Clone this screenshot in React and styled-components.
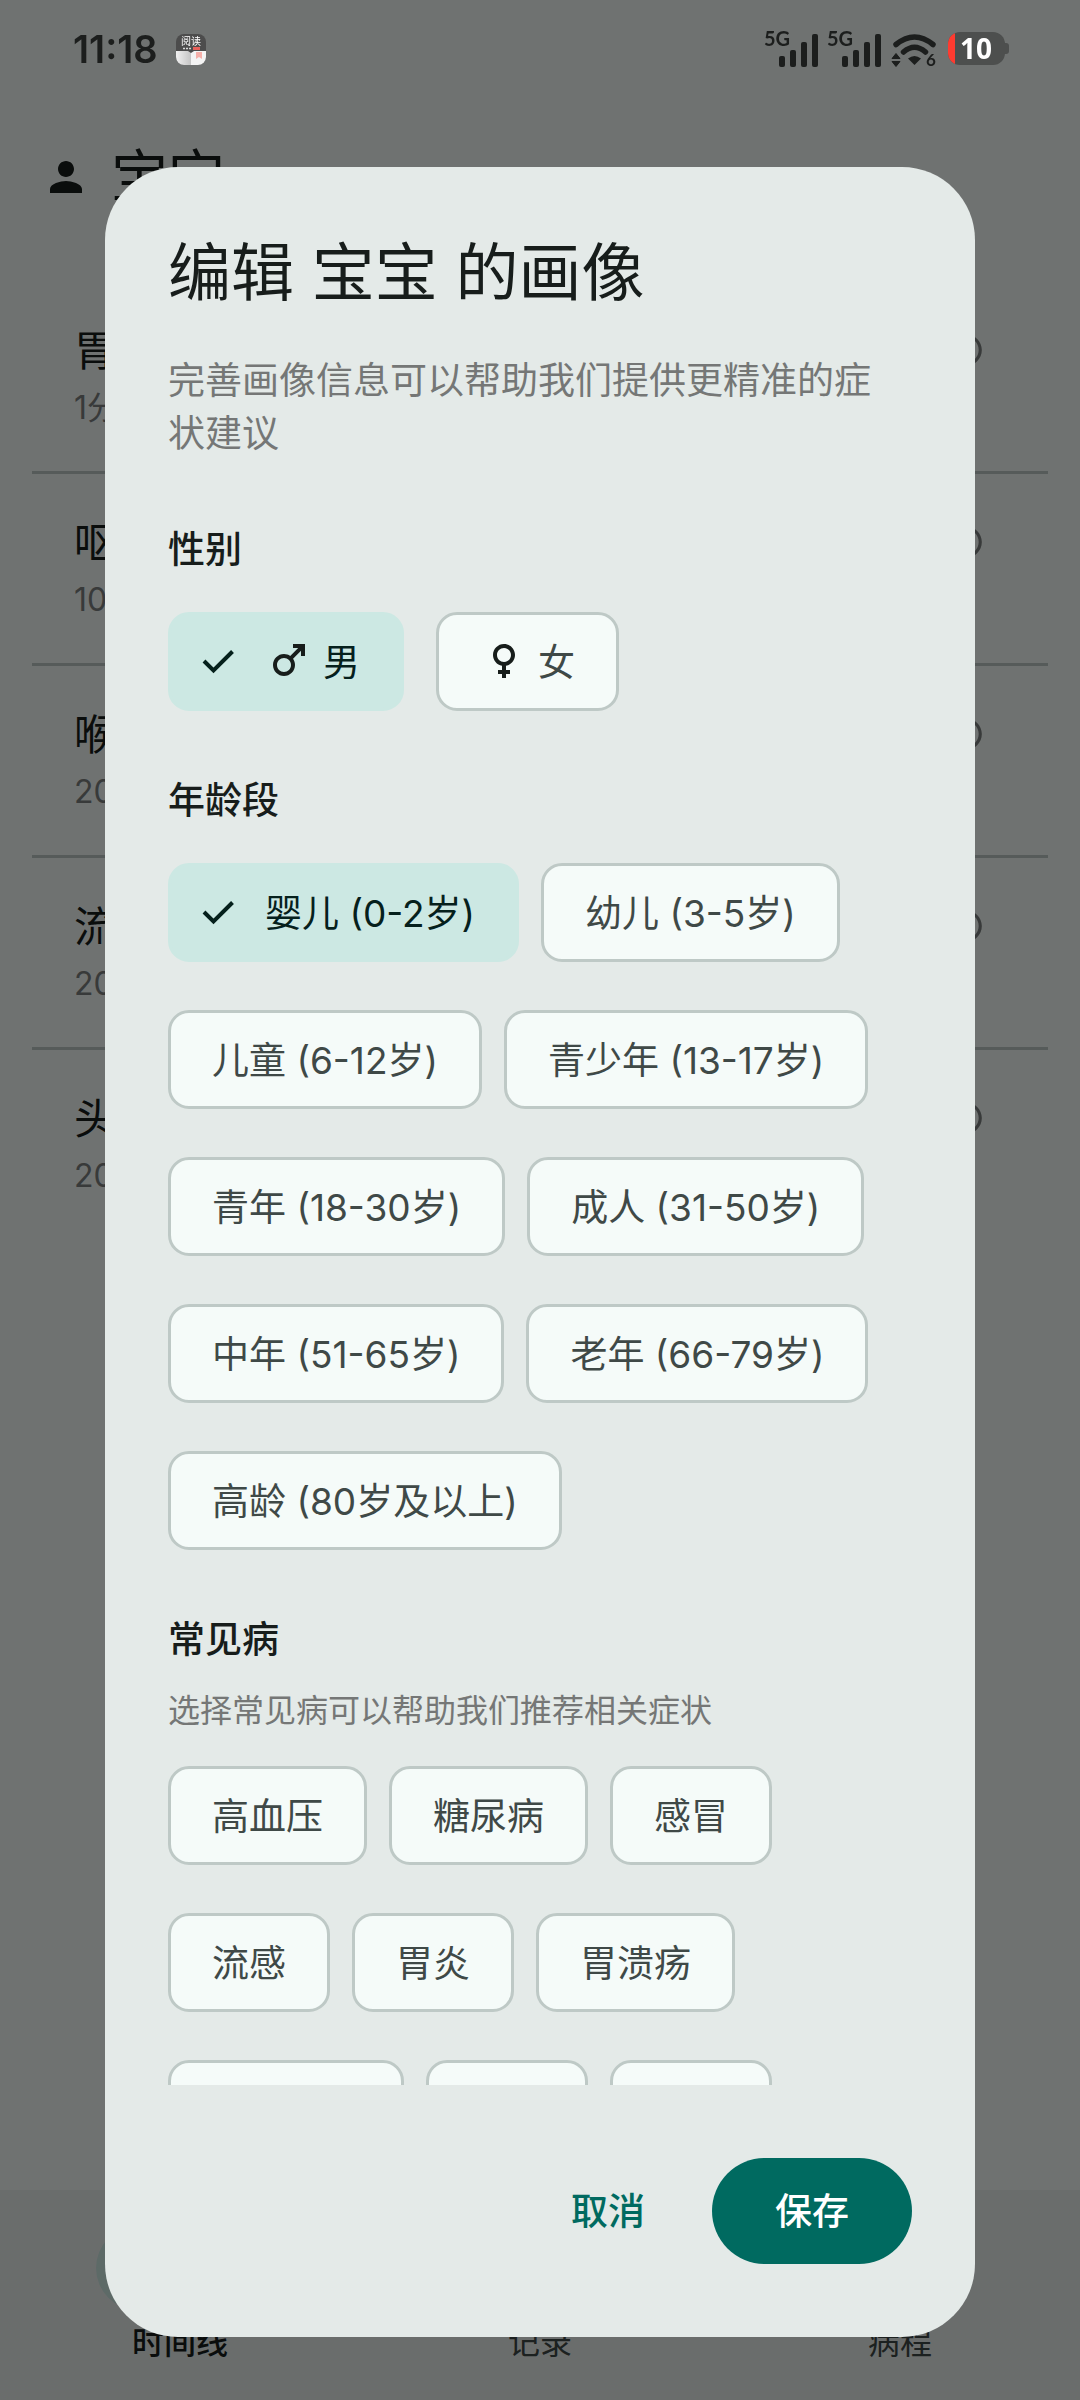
import React, { useState } from 'react'
import styled, { createGlobalStyle } from 'styled-components'
import {
  MdFemale,
  MdMale,
  MdOutlineAssignment,
  MdOutlineInfo,
  MdOutlineMedicalServices,
  MdPerson,
  MdTimeline,
} from 'react-icons/md'

const GlobalStyle = createGlobalStyle`
  * {
    box-sizing: border-box;
  }

  body {
    margin: 0;
    background: #F5FBF9;
    color: #171D1B;
    font-family: Inter, 'Noto Sans CJK SC', sans-serif;
  }

  button {
    font-family: inherit;
    cursor: pointer;
  }
`

const Page = styled.div`
  min-height: 100vh;
  display: flex;
  flex-direction: column;
`

const StatusBar = styled.div`
  position: relative;
  z-index: 2;
  display: flex;
  align-items: center;
  justify-content: space-between;
  height: 98px;
  padding: 0 70px 0 73px;
  color: #1C1E1D;
`

const StatusGroup = styled.div`
  display: flex;
  align-items: center;
  gap: ${props => props.$gap}px;

  svg {
    display: block;
    overflow: visible;
  }
`

const Clock = styled.span`
  font-size: 38px;
  font-weight: 600;
  line-height: 48px;
`

const Header = styled.header`
  display: flex;
  align-items: center;
  gap: 21px;
  height: 158px;
  padding: 0 42px;

  h1 {
    margin: 0;
    font-size: 57px;
    font-weight: 400;
    line-height: 74px;
  }
`

const SymptomList = styled.ul`
  flex: 1;
  margin: 0;
  padding: 26px 32px 0;
  list-style: none;
`

const SymptomItem = styled.li`
  display: flex;
  align-items: flex-start;
  justify-content: space-between;
  padding: 37px 63px 37px 42px;
  color: #7B817F;

  & + & {
    border-top: 3px solid #BEC9C6;
  }

  > svg {
    margin-top: 12px;
  }
`

const SymptomName = styled.div`
  font-size: 42px;
  line-height: 63px;
  color: #171D1B;
`

const SymptomTime = styled.div`
  font-size: 32px;
  line-height: 52px;
`

const NavBar = styled.nav`
  display: grid;
  grid-template-columns: repeat(3, 1fr);
  height: 210px;
  background: #EAF0EE;
`

const NavItem = styled.a`
  display: flex;
  flex-direction: column;
  align-items: center;
  justify-content: center;
  gap: 12px;
  font-size: 32px;
  font-weight: ${props => (props.$active ? 500 : 400)};
  line-height: 42px;
  text-decoration: none;
  color: ${props => (props.$active ? '#171D1B' : '#3F4947')};
`

const NavIcon = styled.span`
  display: grid;
  place-items: center;
  width: 168px;
  height: 84px;
  border-radius: 42px;
  background: ${props => (props.$active ? '#CCE8E3' : 'transparent')};
`

const Scrim = styled.div`
  position: fixed;
  inset: 0;
  z-index: 1;
  display: flex;
  padding: 167px 105px 63px;
  background: rgba(0, 0, 0, 0.545);
`

const Dialog = styled.section`
  flex: 1;
  display: flex;
  flex-direction: column;
  min-width: 0;
  padding: 63px 63px 73px;
  border-radius: 73px;
  background: #E4EAE8;
`

const DialogTitle = styled.h2`
  margin: 0 0 40px;
  font-size: 63px;
  font-weight: 400;
  line-height: 84px;
`

const DialogBody = styled.div`
  flex: 1;
  min-height: 0;
  overflow-y: auto;
  scrollbar-width: none;
`

const Intro = styled.p`
  margin: 0;
  padding-right: 21px;
  font-size: 37px;
  line-height: 53px;
  color: #757776;
`

const Group = styled.div`
  margin-top: 63px;
`

const GroupTitle = styled.h3`
  margin: 0;
  font-size: 37px;
  font-weight: 500;
  line-height: 54px;
`

const Hint = styled.p`
  margin: 24px 0 0;
  font-size: 32px;
  line-height: 40px;
  color: #757776;
`

const ChipRow = styled.div`
  display: flex;
  flex-wrap: wrap;
  gap: 48px ${props => props.$gap || 22}px;
  margin-top: 35px;
`

const ChipButton = styled.button`
  display: flex;
  align-items: center;
  height: 99px;
  padding: 0 41px 4px ${props => (props.$selected ? 27 : 41)}px;
  border: 3px solid ${props => (props.$selected ? '#CCE8E3' : '#BEC9C6')};
  border-radius: 21px;
  background: ${props => (props.$selected ? '#CCE8E3' : '#F5FBF9')};
  color: ${props => (props.$selected ? '#05201C' : '#3F4947')};
  font-size: 37px;
  font-weight: 400;
  white-space: nowrap;
`

const ChipCheck = styled.svg`
  width: 40px;
  height: 40px;
  margin-right: 27px;
`

const ChipLabel = styled.span`
  display: flex;
  align-items: center;
  gap: 10px;

  svg {
    color: #171D1B;
  }
`

const Actions = styled.div`
  display: flex;
  justify-content: flex-end;
  gap: 25px;
  padding-top: 73px;
`

const ActionButton = styled.button`
  height: 106px;
  padding: 0 ${props => (props.$filled ? 63 : 42)}px 4px;
  border: 0;
  border-radius: 53px;
  background: ${props => (props.$filled ? '#006A60' : 'transparent')};
  color: ${props => (props.$filled ? '#FFFFFF' : '#006A60')};
  font-size: 37px;
  font-weight: 500;
`

const symptoms = [
  { name: '胃痛', time: '1分钟前' },
  { name: '呕吐', time: '10分钟前' },
  { name: '喉咙痛', time: '20分钟前' },
  { name: '流鼻涕', time: '20分钟前' },
  { name: '头痛', time: '20分钟前' },
]

const genders = [
  { name: '男', icon: MdMale },
  { name: '女', icon: MdFemale },
]

const ages = [
  '婴儿 (0-2岁)',
  '幼儿 (3-5岁)',
  '儿童 (6-12岁)',
  '青少年 (13-17岁)',
  '青年 (18-30岁)',
  '成人 (31-50岁)',
  '中年 (51-65岁)',
  '老年 (66-79岁)',
  '高龄 (80岁及以上)',
]

const diseases = [
  '高血压',
  '糖尿病',
  '感冒',
  '流感',
  '胃炎',
  '胃溃疡',
  '慢性咽炎',
  '哮喘',
  '鼻炎',
]

const tabs = [
  { name: '时间线', icon: MdTimeline },
  { name: '记录', icon: MdOutlineAssignment },
  { name: '病程', icon: MdOutlineMedicalServices },
]

const ReaderIcon = () => (
  <svg width="30" height="31" viewBox="0 0 30 31" aria-hidden="true">
    <defs>
      <clipPath id="reader">
        <rect width="30" height="31" rx="8" />
      </clipPath>
      <linearGradient id="leaf">
        <stop offset="0" stopColor="#F0F0F0" />
        <stop offset="1" stopColor="#C4C4C4" />
      </linearGradient>
    </defs>
    <g clipPath="url(#reader)">
      <rect width="30" height="31" fill="#4C4C4C" />
      <path d="M0 17h12l3 2v12H0z" fill="url(#leaf)" />
      <path d="M15 19l3-2h12v14H15z" fill="#F4F4F4" />
      <path d="M20 18h6v7l-3-2-3 2z" fill="#F6B0AA" />
      <rect x="17" y="13" width="7" height="3" fill="#E8605A" />
      <path d="M7 14.500h8" stroke="#D8D8D8" strokeWidth="1.500" strokeDasharray="2 1" />
    </g>
    <text x="15" y="11" textAnchor="middle" fontSize="10" fill="#FFFFFF" fontFamily="'Noto Sans CJK SC', sans-serif">阅读</text>
  </svg>
)

const SignalIcon = () => (
  <svg width="55" height="36" viewBox="0 0 55 36" fill="currentColor" aria-hidden="true">
    <text x="0" y="15" fontSize="20" fontWeight="700" fontFamily="Lato, sans-serif">5G</text>
    <rect x="15" y="25" width="6" height="11" rx="2" />
    <rect x="26" y="19" width="6" height="17" rx="2" />
    <rect x="37" y="11" width="6" height="25" rx="2" />
    <rect x="48" y="3" width="6" height="33" rx="2" />
  </svg>
)

const WifiIcon = () => (
  <svg width="48" height="36" viewBox="0 0 48 36" fill="none" stroke="currentColor" aria-hidden="true">
    <path d="M6 13.500Q24.500-1.500 43 13.500" strokeWidth="5.500" strokeLinecap="round" />
    <path d="M13.500 21Q24.500 11.500 35.500 21" strokeWidth="5.500" strokeLinecap="round" />
    <path d="M18 27.500Q24.500 22.500 31 27.500L24.500 34z" fill="currentColor" stroke="none" />
    <path d="M6 22.500l4 5H2zM6 35.500l4-5H2z" fill="currentColor" strokeWidth="1" strokeLinejoin="round" />
    <text x="36" y="35" fontSize="17" fontWeight="700" fill="currentColor" stroke="none" fontFamily="Lato, sans-serif">6</text>
  </svg>
)

const BatteryIcon = () => (
  <svg width="64" height="34" viewBox="0 0 64 34" aria-hidden="true">
    <defs>
      <clipPath id="battery">
        <rect x="2" width="57" height="33" rx="12" />
      </clipPath>
    </defs>
    <path d="M58 11h2a3 3 0 0 1 3 3v5a3 3 0 0 1-3 3h-2z" fill="#4D4F4E" />
    <g clipPath="url(#battery)">
      <rect x="2" width="57" height="33" fill="#4D4F4E" />
      <rect x="2" width="7" height="33" fill="#FF3B30" />
    </g>
    <text x="30" y="27" textAnchor="middle" fontSize="28" fontWeight="700" fill="#FFFFFF" fontFamily="'Open Sans', sans-serif">10</text>
  </svg>
)

const Chip = ({ selected, onClick, children }) => (
  <ChipButton type="button" aria-pressed={selected} $selected={selected} onClick={onClick}>
    {selected && (
      <ChipCheck viewBox="0 0 40 40" fill="none" stroke="currentColor" strokeWidth="4" aria-hidden="true">
        <path d="M6 21l9.500 9.500L34.500 11.500" />
      </ChipCheck>
    )}
    <ChipLabel>{children}</ChipLabel>
  </ChipButton>
)

const App = () => {
  const [gender, setGender] = useState('男')
  const [age, setAge] = useState(ages[0])
  const [picked, setPicked] = useState([])

  const toggle = name =>
    setPicked(picked.includes(name) ? picked.filter(p => p !== name) : [...picked, name])

  return (
    <Page>
      <GlobalStyle />
      <StatusBar>
        <StatusGroup $gap={18}>
          <Clock>11:18</Clock>
          <ReaderIcon />
        </StatusGroup>
        <StatusGroup $gap={8}>
          <SignalIcon />
          <SignalIcon />
          <WifiIcon />
          <BatteryIcon />
        </StatusGroup>
      </StatusBar>

      <Header>
        <MdPerson size={48} />
        <h1>宝宝</h1>
      </Header>

      <SymptomList>
        {symptoms.map(symptom => (
          <SymptomItem key={symptom.name}>
            <div>
              <SymptomName>{symptom.name}</SymptomName>
              <SymptomTime>{symptom.time}</SymptomTime>
            </div>
            <MdOutlineInfo size={38} />
          </SymptomItem>
        ))}
      </SymptomList>

      <NavBar>
        {tabs.map((tab, index) => (
          <NavItem key={tab.name} href="#" $active={index === 0}>
            <NavIcon $active={index === 0}>
              <tab.icon size={63} />
            </NavIcon>
            {tab.name}
          </NavItem>
        ))}
      </NavBar>

      <Scrim>
        <Dialog role="dialog" aria-modal="true" aria-labelledby="dialog-title">
          <DialogTitle id="dialog-title">编辑 宝宝 的画像</DialogTitle>
          <DialogBody>
            <Intro>完善画像信息可以帮助我们提供更精准的症状建议</Intro>

            <Group>
              <GroupTitle>性别</GroupTitle>
              <ChipRow $gap={32}>
                {genders.map(item => (
                  <Chip
                    key={item.name}
                    selected={gender === item.name}
                    onClick={() => setGender(item.name)}
                  >
                    <item.icon size={48} />
                    {item.name}
                  </Chip>
                ))}
              </ChipRow>
            </Group>

            <Group>
              <GroupTitle>年龄段</GroupTitle>
              <ChipRow>
                {ages.map(name => (
                  <Chip key={name} selected={age === name} onClick={() => setAge(name)}>
                    {name}
                  </Chip>
                ))}
              </ChipRow>
            </Group>

            <Group>
              <GroupTitle>常见病</GroupTitle>
              <Hint>选择常见病可以帮助我们推荐相关症状</Hint>
              <ChipRow>
                {diseases.map(name => (
                  <Chip key={name} selected={picked.includes(name)} onClick={() => toggle(name)}>
                    {name}
                  </Chip>
                ))}
              </ChipRow>
            </Group>
          </DialogBody>

          <Actions>
            <ActionButton type="button">取消</ActionButton>
            <ActionButton type="button" $filled>保存</ActionButton>
          </Actions>
        </Dialog>
      </Scrim>
    </Page>
  )
}

export default App
